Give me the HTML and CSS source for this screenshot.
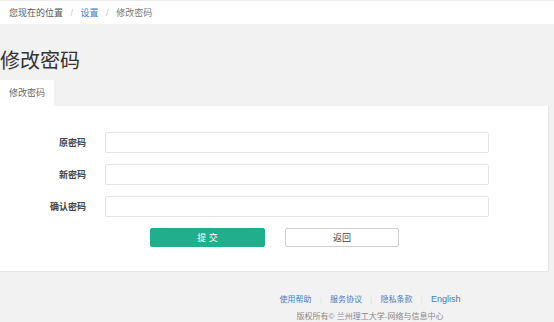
FILE: index.html
```html
<!DOCTYPE html>
<html lang="zh-CN">
<head>
    <meta charset="UTF-8">
    <title>修改密码</title>
    <link rel="stylesheet" href="styles.css">
</head>
<body>
    <div class="crumbs">
        <span>您现在的位置</span>
        <span class="sep">/</span>
        <a href="#">设置</a>
        <span class="sep">/</span>
        <span class="current">修改密码</span>
    </div>

    <h1 class="page-title">修改密码</h1>

    <div class="tabs">
        <div class="tab active">修改密码</div>
    </div>

    <div class="panel">
        <form class="form">
            <div class="row">
                <label>原密码</label>
                <input type="password">
            </div>
            <div class="row">
                <label>新密码</label>
                <input type="password">
            </div>
            <div class="row">
                <label>确认密码</label>
                <input type="password">
            </div>
            <div class="actions">
                <button type="button" class="btn btn-primary">提 交</button>
                <button type="button" class="btn btn-default">返回</button>
            </div>
        </form>
    </div>

    <div class="footer">
        <div class="links">
            <a href="#">使用帮助</a>
            <span class="bar">|</span>
            <a href="#">服务协议</a>
            <span class="bar">|</span>
            <a href="#">隐私条款</a>
            <span class="bar">|</span>
            <a href="#" class="en">English</a>
        </div>
        <div class="copy">版权所有© 兰州理工大学-网络与信息中心</div>
    </div>
</body>
</html>
```

FILE: styles.css
```css
body {
    margin: 0;
    background: #f2f2f2;
    font-family: "Liberation Sans", "Noto Sans CJK SC", sans-serif;
    color: #333;
}
a {
    text-decoration: none;
}
.crumbs {
    height: 24px;
    line-height: 25px;
    padding-left: 9px;
    background: #fff;
    border-top: 1px solid #ececec;
    box-sizing: border-box;
    font-size: 9px;
    color: #555;
}
.crumbs a {
    color: #3a7ec0;
}
.crumbs .sep {
    color: #c8c8c8;
    margin: 0 5px;
}
.crumbs .current {
    color: #777;
}
.page-title {
    margin: 0;
    padding-top: 24px;
    height: 32px;
    font-size: 20px;
    font-weight: normal;
    line-height: 26px;
    color: #333;
}
.tabs {
    display: flex;
    height: 26px;
}
.tab {
    width: 54px;
    line-height: 26px;
    text-align: center;
    font-size: 9px;
    color: #666;
}
.tab.active {
    background: #fff;
}
.panel {
    width: 549px;
    box-sizing: border-box;
    background: #fff;
    border-right: 1px solid #e4e4e4;
    border-bottom: 1px solid #e8e8e8;
    padding: 26px 0 24px;
}
.form {
    display: flex;
    flex-direction: column;
    gap: 11px;
}
.row {
    display: flex;
    align-items: center;
}
.row label {
    width: 86px;
    text-align: right;
    font-size: 9px;
    font-weight: bold;
    color: #444;
}
.row input {
    margin-left: 19px;
    width: 384px;
    height: 21px;
    box-sizing: border-box;
    border: 1px solid #e3e3e3;
    border-radius: 2px;
    background: #fff;
    outline: none;
}
.actions {
    display: flex;
    gap: 20px;
    padding-left: 150px;
}
.btn {
    height: 19px;
    padding: 0;
    font-family: inherit;
    font-size: 9px;
    border-radius: 2px;
    cursor: pointer;
}
.btn-primary {
    width: 115px;
    background: #21ae8c;
    border: 1px solid #21ae8c;
    color: #fff;
}
.btn-default {
    width: 114px;
    background: #fff;
    border: 1px solid #cfcfcf;
    color: #444;
}
.footer {
    padding: 21px 0 0 186px;
    text-align: center;
    font-size: 8px;
}
.links a {
    color: #3f7fbe;
}
.links .en {
    font-size: 9px;
}
.links .bar {
    color: #e0e0e0;
    margin: 0 6px;
}
.copy {
    margin-top: 6px;
    color: #888;
}
```
